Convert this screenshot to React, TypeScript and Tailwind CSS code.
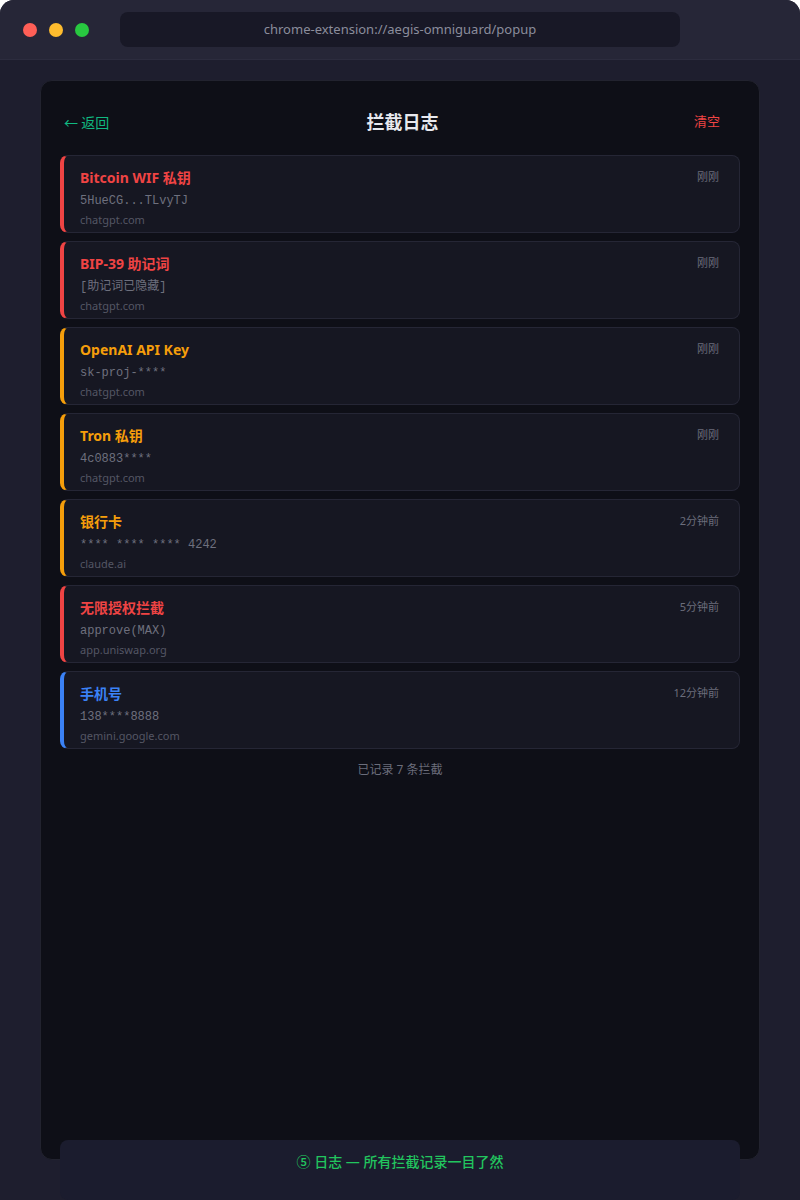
import React from "react";

type Item = { title: string; value: string; domain: string; time: string; color: "red" | "amber" | "blue" };

const items: Item[] = [
  { title: "Bitcoin WIF 私钥", value: "5HueCG...TLvyTJ", domain: "chatgpt.com", time: "刚刚", color: "red" },
  { title: "BIP-39 助记词", value: "[助记词已隐藏]", domain: "chatgpt.com", time: "刚刚", color: "red" },
  { title: "OpenAI API Key", value: "sk-proj-****", domain: "chatgpt.com", time: "刚刚", color: "amber" },
  { title: "Tron 私钥", value: "4c0883****", domain: "chatgpt.com", time: "刚刚", color: "amber" },
  { title: "银行卡", value: "**** **** **** 4242", domain: "claude.ai", time: "2分钟前", color: "amber" },
  { title: "无限授权拦截", value: "approve(MAX)", domain: "app.uniswap.org", time: "5分钟前", color: "red" },
  { title: "手机号", value: "138****8888", domain: "gemini.google.com", time: "12分钟前", color: "blue" },
];

const barClass = {
  red: "border-l-[#ef4444]",
  amber: "border-l-[#f59e0b]",
  blue: "border-l-[#3b82f6]",
};
const textClass = {
  red: "text-[#ef4444]",
  amber: "text-[#f59e0b]",
  blue: "text-[#3b82f6]",
};

const sans = "font-['Noto_Sans','Noto_Sans_CJK_SC',sans-serif]";
const mono = "font-['Liberation_Mono','Noto_Sans_CJK_SC',monospace]";

export default function App() {
  return (
    <div className={`w-[800px] h-[1200px] bg-[#1e1e2e] relative overflow-hidden rounded-t-[14px] ${sans}`}>
      {/* title bar */}
      <div className="h-[60px] bg-[#262637] flex items-center px-[23px] gap-[12px] border-b border-[#2c2c3e]">
        <span className="w-[14px] h-[14px] rounded-full bg-[#ff5f57]" />
        <span className="w-[14px] h-[14px] rounded-full bg-[#febc2e]" />
        <span className="w-[14px] h-[14px] rounded-full bg-[#28c840]" />
        <div className="ml-[19px] w-[560px] h-[35px] rounded-[8px] bg-[#181826] flex items-center justify-center text-[13px] text-[#8b8d9c]">
          chrome-extension://aegis-omniguard/popup
        </div>
      </div>

      {/* popup panel */}
      <div className="mx-[40px] mt-[20px] h-[1080px] rounded-[12px] bg-[#0e0f17] border border-[#22232f] px-[19px] pt-[20px]">
        <div className="h-[42px] flex items-center justify-between">
          <span className="ml-[4px] text-[14px] text-[#10b981] font-['Noto_Sans_CJK_SC',sans-serif]">← 返回</span>
          <span className="text-[18px] font-semibold text-[#e8e9ee] ml-[2px]">拦截日志</span>
          <span className="mr-[20px] text-[13px] text-[#ef4444]">清空</span>
        </div>
        <div className="mt-[12px] flex flex-col gap-[8px]">
          {items.map((it, i) => (
            <div
              key={i}
              className={`h-[78px] rounded-[8px] bg-[#161722] border border-[#252635] border-l-4 ${barClass[it.color]} pl-[16px] pr-[20px] pt-[12px] flex justify-between`}
            >
              <div className="flex flex-col">
                <div className={`text-[14px] leading-[20px] font-bold ${textClass[it.color]}`}>{it.title}</div>
                <div className={`mt-[4px] text-[12px] leading-[18px] text-[#6e707e] ${mono}`}>{it.value}</div>
                <div className="mt-[2px] text-[11px] leading-[16px] text-[#545664]">{it.domain}</div>
              </div>
              <div className="text-[11px] leading-[18px] text-[#6b6d7b]">{it.time}</div>
            </div>
          ))}
        </div>
        <div className="mt-[12px] text-center text-[12px] text-[#6b6d7b]">已记录 7 条拦截</div>
      </div>

      {/* caption */}
      <div className="absolute left-[60px] top-[1140px] w-[680px] h-[60px] rounded-[8px] bg-[#1b1c2e] flex justify-center pt-[11px]">
        <span className="text-[14px] font-medium text-[#22c55e]">⑤ 日志 — 所有拦截记录一目了然</span>
      </div>
    </div>
  );
}
